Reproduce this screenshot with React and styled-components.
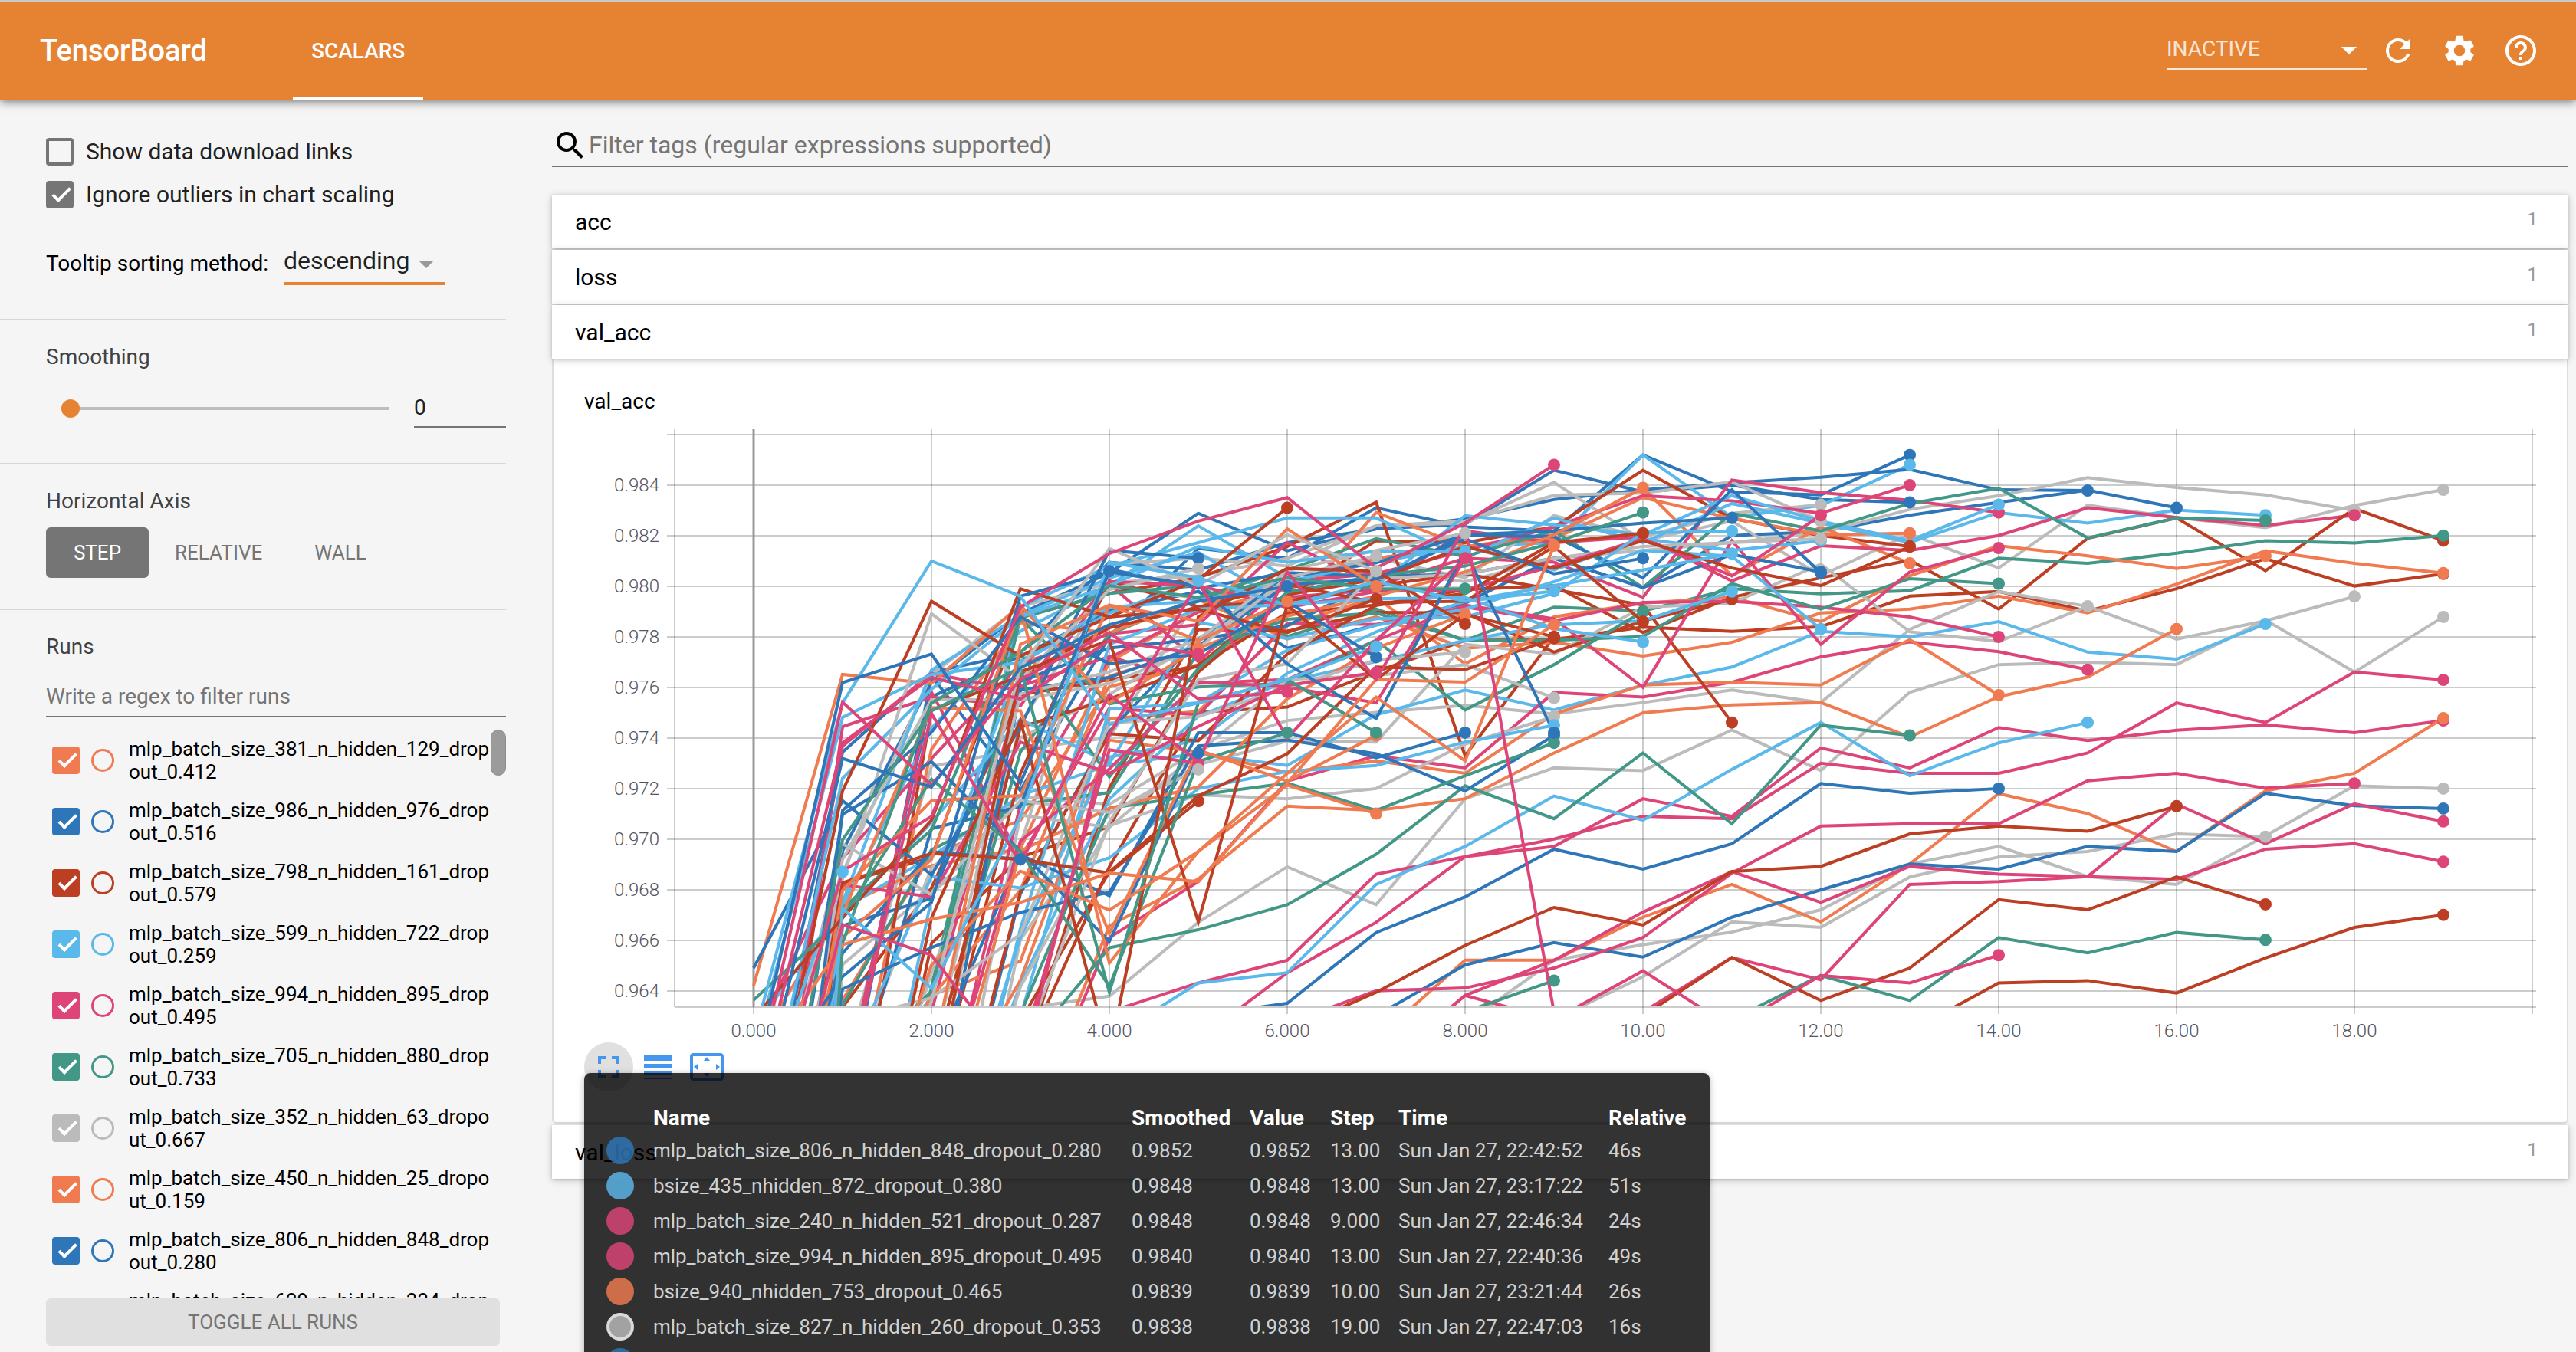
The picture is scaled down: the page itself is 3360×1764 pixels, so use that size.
import React from 'react';
import styled, { createGlobalStyle } from 'styled-components';
import {
  MdRefresh,
  MdSettings,
  MdHelpOutline,
  MdSearch,
  MdFullscreen,
  MdLineWeight,
  MdSettingsOverscan,
} from 'react-icons/md';

/* ---------- palette ---------- */

const RUN = {
  o: '#f07b51',
  b: '#2e76b8',
  r: '#bc3e23',
  l: '#5bb8eb',
  p: '#dd4579',
  g: '#429787',
  y: '#bbbbbb',
};

const GlobalStyle = createGlobalStyle`
  *, *::before, *::after { box-sizing: border-box; }
  body {
    margin: 0;
    background: #f5f5f5;
    color: #000;
    font-family: Roboto, "Noto Sans", sans-serif;
    font-size: 28px;
  }
  button, input, select { font-family: inherit; margin: 0; }
`;

/* ---------- page frame ---------- */

const Page = styled.div`
  display: flex;
  flex-direction: column;
  height: 100vh;
  overflow: hidden;
`;

const Header = styled.header`
  display: flex;
  align-items: stretch;
  flex: none;
  height: 130px;
  padding-right: 48px;
  border-top: 2px solid #c9c9c9;
  background: #e68332;
  color: #fff;
  position: relative;
  z-index: 1;
  box-shadow: 0 2px 12px rgba(0, 0, 0, 0.6);
`;

const Brand = styled.h1`
  flex: none;
  width: 382px;
  margin: 0;
  padding-left: 52px;
  font-size: 38px;
  font-weight: 500;
  line-height: 128px;
`;

const Tabs = styled.nav`
  display: flex;
  flex: 1;
`;

const Tab = styled.a`
  padding: 2px 24px 0;
  border-bottom: 4px solid #fff;
  color: inherit;
  font-size: 28px;
  font-weight: 500;
  line-height: 126px;
  text-decoration: none;
`;

const HeaderTools = styled.div`
  display: flex;
  align-items: center;
  gap: 32px;
`;

const SelectBox = styled.div`
  position: relative;
  display: flex;
  color: ${(p) => p.$arrow};
  &::after {
    content: '';
    position: absolute;
    right: 14px;
    top: 20px;
    border: 10px solid transparent;
    border-top-color: currentColor;
    border-bottom: 0;
    pointer-events: none;
  }
`;

const StatusSelect = styled.select`
  appearance: none;
  width: 262px;
  height: 50px;
  padding: 0 0 4px;
  border: 0;
  border-bottom: 2px solid rgba(255, 255, 255, 0.8);
  background: transparent;
  color: rgba(255, 255, 255, 0.8);
  font-size: 28px;
`;

const SortSelect = styled.select`
  appearance: none;
  width: 210px;
  height: 52px;
  padding: 0 0 8px;
  border: 0;
  border-bottom: 4px solid #e68332;
  background: transparent;
  color: #212121;
  font-size: 32px;
`;

const IconButton = styled.button`
  display: flex;
  padding: 0;
  border: 0;
  background: none;
  color: inherit;
  font-size: 48px;
`;

const StatusGroup = styled.div`
  display: flex;
  align-items: center;
  gap: 16px;
`;

const Body = styled.div`
  flex: 1;
  min-height: 0;
  display: grid;
  grid-template-columns: 660px minmax(0, 1fr);
  gap: 60px;
`;

/* ---------- sidebar ---------- */

const Sidebar = styled.aside`
  display: flex;
  flex-direction: column;
  min-height: 0;
`;

const Section = styled.section`
  flex: none;
  padding: 32px 0 ${(p) => p.$bottom}px 60px;
  border-bottom: 2px solid #d6d6d6;
`;

const OptionsSection = styled(Section)`
  padding-top: 50px;
`;

const RunsSection = styled.section`
  flex: 1;
  min-height: 0;
  display: flex;
  flex-direction: column;
  padding: 32px 0 8px 60px;
`;

const Heading = styled.h2`
  margin: 0;
  color: #424242;
  font-size: 28px;
  font-weight: 400;
  line-height: 32px;
`;

const CheckLabel = styled.label`
  display: flex;
  align-items: center;
  gap: 16px;
  height: 36px;
  margin-bottom: 20px;
  color: #212121;
  font-size: 30px;
  line-height: 36px;
`;

const CheckBox = styled.input`
  appearance: none;
  position: relative;
  flex: none;
  width: 36px;
  height: 36px;
  border: 4px solid ${(p) => p.$color};
  border-radius: 4px;
  &:checked {
    background: ${(p) => p.$color};
  }
  &:checked::after {
    content: '';
    position: absolute;
    left: 0;
    top: 0;
    width: 12px;
    height: 24px;
    border: solid #fff;
    border-width: 0 4px 4px 0;
    transform: rotate(45deg);
    transform-origin: 100% 100%;
  }
`;

const SortRow = styled.div`
  display: flex;
  align-items: center;
  gap: 20px;
  margin-top: 48px;
  label {
    padding-bottom: 4px;
    line-height: 36px;
  }
`;

const SliderRow = styled.div`
  display: flex;
  align-items: center;
  gap: 20px;
  margin-top: 26px;
  padding-left: 20px;
`;

const Slider = styled.input`
  appearance: none;
  flex: 1;
  min-width: 0;
  height: 24px;
  background: linear-gradient(#bdbdbd, #bdbdbd) center / calc(100% - 24px) 4px no-repeat;
  &::-webkit-slider-thumb {
    appearance: none;
    width: 24px;
    height: 24px;
    border-radius: 50%;
    background: #e68332;
  }
`;

const TextField = styled.input`
  width: ${(p) => p.$width};
  height: ${(p) => p.$height}px;
  margin-top: ${(p) => p.$top || 0}px;
  padding: 0 0 2px;
  border: 0;
  border-bottom: 2px solid #757575;
  border-radius: 0;
  background: transparent;
  color: #212121;
  font-size: 28px;
  &::placeholder {
    color: #757575;
    opacity: 1;
  }
`;

const AxisButtons = styled.div`
  display: flex;
  margin-top: 18px;
`;

const AxisButton = styled.button`
  min-width: 134px;
  height: 66px;
  padding: 0 34px;
  border: 0;
  border-radius: 6px;
  background: ${(p) => (p.$active ? '#757575' : 'transparent')};
  color: ${(p) => (p.$active ? '#fff' : '#757575')};
  font-size: 26px;
`;

const RunListFrame = styled.div`
  position: relative;
  flex: 1;
  min-height: 0;
  overflow: hidden;
`;

const ScrollThumb = styled.div`
  position: absolute;
  top: 16px;
  right: 0;
  width: 20px;
  height: 60px;
  border: 1px solid #8c8c8c;
  border-radius: 10px;
  background: #9b9b9b;
`;

const RunList = styled.ul`
  margin: 0;
  padding: 16px 20px 0 8px;
  list-style: none;
`;

const RunRow = styled.li`
  display: flex;
  align-items: center;
  height: 80px;
`;

const Isolate = styled.input`
  appearance: none;
  flex: none;
  width: 30px;
  height: 30px;
  margin: 0 19px 0 15px;
  border: 3px solid ${(p) => p.$color};
  border-radius: 50%;
`;

const RunName = styled.label`
  flex: 1;
  min-width: 0;
  font-size: 26px;
  line-height: 30px;
  word-break: break-all;
`;

const ToggleAll = styled.button`
  flex: none;
  height: 62px;
  margin-right: 8px;
  border: 0;
  border-radius: 6px;
  background: #e0e0e0;
  color: #757575;
  font-size: 26px;
`;

/* ---------- main column ---------- */

const Main = styled.main`
  min-width: 0;
  padding: 36px 10px 0 0;
`;

const TagFilter = styled.label`
  display: flex;
  align-items: flex-start;
  height: 52px;
  margin-bottom: 36px;
  border-bottom: 2px solid #757575;
  font-size: 48px;
`;

const TagInput = styled.input`
  flex: 1;
  height: 46px;
  padding: 0;
  border: 0;
  background: transparent;
  font-size: 32px;
  &::placeholder {
    color: #757575;
    opacity: 1;
  }
`;

const Category = styled.button`
  position: relative;
  display: flex;
  align-items: center;
  justify-content: space-between;
  width: 100%;
  height: 70px;
  margin-bottom: ${(p) => (p.$open ? 0 : 2)}px;
  padding: 0 40px 0 30px;
  border: 0;
  background: #fff;
  box-shadow: 0 2px 10px rgba(0, 0, 0, 0.2), 0 1px 3px rgba(0, 0, 0, 0.15);
  color: #000;
  font-size: 30px;
`;

const Count = styled.span`
  padding-bottom: 6px;
  color: #999;
  font-size: 24px;
`;

const Card = styled.article`
  margin-bottom: 2px;
  padding: 40px;
  border: 2px solid #dedede;
  border-top: 0;
  border-radius: 0 0 6px 6px;
  background: #fff;
`;

const CardTitle = styled.h3`
  margin: 0 0 16px;
  font-size: 28px;
  font-weight: 400;
  line-height: 32px;
`;

const ChartSvg = styled.svg`
  display: block;
  width: 100%;
  height: auto;
  text {
    fill: #55545f;
    font-family: Roboto, "Liberation Sans", sans-serif;
    font-size: 24px;
    font-weight: 300;
  }
`;

const ChartTools = styled.div`
  position: relative;
  display: flex;
  color: #4596ef;
`;

const ChartTool = styled(IconButton)`
  align-items: center;
  justify-content: center;
  width: 64px;
  height: 64px;
  border-radius: 50%;
  background: ${(p) => (p.$hover ? '#e0e0e0' : 'none')};
`;

const Tooltip = styled.div`
  position: absolute;
  left: 0;
  top: 40px;
  z-index: 2;
  width: 1468px;
  padding: 38px 24px 24px 29px;
  border-radius: 8px;
  background: rgba(0, 0, 0, 0.8);
  box-shadow: 0 2px 10px rgba(0, 0, 0, 0.3);
`;

const TooltipTable = styled.table`
  width: 100%;
  table-layout: fixed;
  border-collapse: collapse;
  color: #d0d0d0;
  font-size: 26px;
  text-align: left;
  white-space: nowrap;
  th {
    height: 40px;
    padding: 0;
    color: #fff;
    font-size: 28px;
    font-weight: 700;
  }
  td {
    height: 46px;
    padding: 0;
  }
`;

const Col = styled.col`
  width: ${(p) => p.$w}px;
`;

const Swatch = styled.span`
  display: block;
  width: 36px;
  height: 36px;
  border: ${(p) => (p.$nearest ? '4px solid #fff' : '0')};
  border-radius: 50%;
  background: ${(p) => p.$color};
  opacity: 0.82;
`;

/* ---------- data ---------- */

const RUNS = [
  ['o', 'mlp_batch_size_381_n_hidden_129_dropout_0.412'],
  ['b', 'mlp_batch_size_986_n_hidden_976_dropout_0.516'],
  ['r', 'mlp_batch_size_798_n_hidden_161_dropout_0.579'],
  ['l', 'mlp_batch_size_599_n_hidden_722_dropout_0.259'],
  ['p', 'mlp_batch_size_994_n_hidden_895_dropout_0.495'],
  ['g', 'mlp_batch_size_705_n_hidden_880_dropout_0.733'],
  ['y', 'mlp_batch_size_352_n_hidden_63_dropout_0.667'],
  ['o', 'mlp_batch_size_450_n_hidden_25_dropout_0.159'],
  ['b', 'mlp_batch_size_806_n_hidden_848_dropout_0.280'],
  ['r', 'mlp_batch_size_629_n_hidden_334_dropout_0.341'],
];

const POINTS = [
  ['b', 'mlp_batch_size_806_n_hidden_848_dropout_0.280', '0.9852', '13.00', 'Sun Jan 27, 22:42:52', '46s'],
  ['l', 'bsize_435_nhidden_872_dropout_0.380', '0.9848', '13.00', 'Sun Jan 27, 23:17:22', '51s'],
  ['p', 'mlp_batch_size_240_n_hidden_521_dropout_0.287', '0.9848', '9.000', 'Sun Jan 27, 22:46:34', '24s'],
  ['p', 'mlp_batch_size_994_n_hidden_895_dropout_0.495', '0.9840', '13.00', 'Sun Jan 27, 22:40:36', '49s'],
  ['o', 'bsize_940_nhidden_753_dropout_0.465', '0.9839', '10.00', 'Sun Jan 27, 23:21:44', '26s'],
  ['y', 'mlp_batch_size_827_n_hidden_260_dropout_0.353', '0.9838', '19.00', 'Sun Jan 27, 22:47:03', '16s'],
  ['b', 'bsize_512_nhidden_640_dropout_0.310', '0.9838', '15.00', 'Sun Jan 27, 22:44:10', '58s'],
];

/* Each curve: colour key, step of its first listed point, heights below the plot's top edge. */
const CURVES = [
  ['b', 5, [215, 311, 255, 243, 105, 160, 143, 180, 187]],
  ['b', 5, [305, 330, 201, 250, 260, 66, 160, 168, 66]],
  ['l', 5, [247, 380, 330, 300, 290, 66, 225, 195, 91]],
  ['b', 4, [340, 360, 290, 255, 230, 180, 155, 137, 123, 103, 155, 157]],
  ['b', 5, [415, 560, 500, 445, 330, 405, 272, 262, 220, 187, 156, 201]],
  ['y', 4, [345, 330, 350, 247, 240, 136, 285, 235, 375, 268, 355, 194, 226, 252, 195, 155]],
  ['y', 5, [375, 330, 247, 235, 169, 163, 135, 235]],
  ['y', 5, [430, 400, 330, 380, 221, 275, 215, 193]],
  ['y', 6, [390, 363, 390, 330, 310, 290, 265, 205, 170, 124, 149, 168, 208]],
  ['r', 4, [420, 380, 300, 187, 835, 531]],
  ['r', 6, [430, 285, 290, 250, 105, 228, 272, 300]],
  ['o', 6, [470, 213, 300, 280, 175, 228, 270, 266]],
  ['o', 6, [410, 330, 300, 270, 150, 375, 250, 343]],
  ['p', 7, [370, 310, 250, 170, 183, 215, 143]],
  ['p', 5, [500, 290, 400, 330, 340, 430, 130, 162, 182, 213]],
  ['l', 5, [315, 450, 400, 221, 245, 270, 170, 235, 285, 193]],
  ['l', 5, [290, 227, 227, 330, 227, 290, 190, 240, 290, 213, 240, 207, 220]],
  ['p', 6, [430, 410, 260, 290, 275, 388, 298, 310, 272, 201, 226, 246, 220]],
  ['r', 7, [450, 410, 400, 520, 430, 380, 335, 460, 279, 227, 362, 203, 285]],
  ['g', 5, [430, 360, 280, 325, 260, 405, 215, 260, 190, 151, 278, 227, 233]],
  ['g', 4, [420, 400, 530, 460, 540, 455, 465, 408, 421, 413, 330, 343, 317, 285, 291, 272]],
  ['r', 7, [620, 540, 538, 506, 517, 505, 427, 415, 465, 408, 331, 401, 370]],
  ['o', 7, [480, 560, 545, 580, 545, 470, 460, 427, 470, 396, 311, 343, 368]],
  ['o', 7, [430, 600, 480, 445, 430, 492, 375, 298, 324, 356, 324]],
  ['y', 7, [800, 550, 575, 455, 445, 345, 518, 543, 453]],
  ['y', 5, [820, 745, 724, 706, 728, 699, 667, 699, 512, 415, 453, 537, 490, 428]],
  ['y', 4, [1450, 1261, 1119, 1216, 945, 866, 873, 769, 873, 673, 602, 596, 602, 488, 621, 480]],
  ['l', 5, [830, 860, 730, 667, 718, 655, 608, 517, 531, 492, 570, 588, 498]],
  ['o', 4, [1270, 1150, 964, 975, 945, 828, 725, 705, 699, 787, 684, 634, 511]],
  ['p', 4, [1300, 1157, 900, 835, 866, 673, 685, 647, 582, 544, 569, 615]],
  ['o', 4, [795, 825, 878, 848, 880, 728, 654, 647, 654, 538, 680]],
  ['p', 4, [1490, 1416, 1358, 1138, 1093, 1048, 990, 996, 854, 880, 880, 828, 700, 750, 621, 641]],
  ['p', 5, [1560, 1390, 1261, 1093, 1067, 945, 990, 815, 866, 763, 796, 770, 756, 776, 745]],
  ['y', 8, [1700, 1510, 1400, 1260, 1274, 1145, 1094, 1080, 1035, 1042]],
  ['y', 8, [1520, 1358, 1318, 1286, 1229, 1112, 1067, 1144, 1164, 1040, 912, 919]],
  ['o', 7, [1560, 1358, 1358, 1248, 1164, 1260, 1112, 932, 983, 1080, 925, 880, 739]],
  ['b', 7, [1500, 1370, 1313, 1350, 1248, 1178, 1112, 1125, 1067, 1080, 931, 963, 970]],
  ['p', 6, [1520, 1436, 1429, 1378, 1300, 1135, 1015, 1009, 1009, 899, 880, 918, 906]],
  ['p', 7, [1640, 1448, 1358, 1235, 1131, 1210, 1118, 1138, 1144, 959, 1060, 958, 1003]],
  ['p', 10, [1490, 1351, 1408, 1164, 1157, 1144, 1151, 1074, 1060, 1106]],
  ['r', 6, [1540, 1440, 1320, 1223, 1268, 1131, 1118, 1035, 1015, 1028, 964]],
  ['r', 10, [1500, 1351, 1461, 1378, 1203, 1229, 1145, 1215]],
  ['g', 11, [1510, 1397, 1461, 1300, 1339, 1287, 1306]],
  ['r', 13, [1540, 1416, 1410, 1442, 1352, 1274, 1242]],
  ['p', 7, [1640, 1448, 1510, 1385, 1530, 1397, 1416, 1345]],
  ['b', 5, [1500, 1468, 1287, 1196, 1074, 1125, 1060, 906, 931, 919]],
  ['l', 4, [1560, 1416, 1390, 1164, 1067, 938, 1000, 870, 750, 886, 802, 750]],
  ['g', 3, [1600, 1326, 1280, 1216, 1087, 912, 996, 828, 1009, 757, 783]],
  ['r', 7, [400, 370, 410, 450, 750]],
  ['r', 8, [470, 570, 490, 435]],
  ['p', 8, [455, 490, 443, 440, 455, 480, 531]],
  ['g', 7, [470, 540, 540, 530, 395, 460, 382, 395]],
  ['p', 6, [640, 540, 450, 485, 660, 285, 550, 365, 304]],
  ['b', 8, [370, 330, 405, 320, 365]],
  ['b', 8, [270, 275, 380, 155, 367]],
  ['l', 8, [460, 390, 310, 325, 511]],
  ['l', 7, [340, 300, 360, 280, 310, 285]],
  ['y', 8, [370, 330, 300, 290, 280]],
  ['p', 8, [410, 350, 280, 375, 220]],
  ['r', 8, [300, 355, 285, 355, 400, 300]],
  ['b', 8, [270, 260, 240, 227]],
  ['l', 8, [480, 420, 265, 260]],
  ['l', 8, [440, 400, 360, 318]],
  ['l', 8, [540, 500, 490, 415]],
  ['o', 8, [365, 270, 150]],
  ['g', 8, [350, 290, 213]],
  ['r', 8, [420, 290, 266]],
  ['b', 8, [280, 370, 330]],
  ['g', 6, [650, 540, 718, 602, 466]],
  ['r', 8, [440, 300, 492]],
  ['l', 8, [430, 510, 544]],
  ['y', 6, [640, 630, 602, 687]],
  ['y', 6, [945, 919, 805, 735]],
  ['l', 6, [875, 860, 800, 757]],
  ['b', 6, [795, 830, 925, 783]],
  ['g', 6, [905, 975, 886, 802]],
  ['g', 8, [1490, 1410]],
  ['b', 5, [776, 776, 840, 776]],
  ['p', 7, [700, 330]],
  ['o', 7, [560, 473]],
  ['y', 7, [590, 570]],
  ['y', 7, [310, 266]],
  ['p', 4, [820, 855]],
  ['r', 6, [830, 608, 615, 535]],
  ['y', 5, [640, 600, 363]],
  ['o', 0, [1423, 627, 650, 450, 700, 560]],
  ['b', 0, [1378, 950, 1140, 760, 310, 330]],
  ['l', 0, [1600, 737, 627, 597, 470, 388]],
  ['l', 0, [1900, 893, 665, 480, 400, 300, 340, 312, 312]],
  ['r', 0, [2000, 925, 440, 580, 480, 385, 201]],
  ['y', 0, [1900, 1150, 472, 640, 410, 356]],
  ['p', 0, [2300, 1165, 1196, 800, 880, 760, 655, 622]],
  ['y', 0, [2000, 1060, 1190, 950, 980, 870]],
  ['l', 0, [1800, 1132]],
  ['b', 0, [2200, 1340, 1080, 1100]],
  ['b', 0, [2400, 985, 850, 1080, 1310, 828]],
  ['r', 0, [2500, 1160, 1085, 1100, 1135, 951]],
  ['g', 0, [1460, 1250, 895, 1080, 1425, 850, 776]],
  ['o', 0, [2500, 1240, 712, 720, 1290, 820, 900, 783]],
  ['y', 0, [2500, 1100, 692, 692, 650, 560, 380, 324]],
  ['o', 0, [2500, 1180, 950, 937, 450, 540, 440]],
  ['r', 1, [1250, 1000, 408, 480, 460, 520, 434]],
  ['b', 1, [1400, 1210, 427, 365, 400, 600, 740, 312, 776]],
  ['o', 1, [1300, 1100, 455, 1365, 1080, 910, 983]],
  ['b', 1, [975, 775, 480, 600, 575, 440, 583]],
  ['r', 2, [1250, 745, 1600, 480, 356, 363, 498]],
  ['r', 3, [620, 540, 1260, 450, 640, 473, 531]],
  ['g', 2, [700, 570, 400, 430, 380, 408, 408]],
  ['g', 1, [1050, 720, 610, 1440, 700, 640, 776]],
  ['o', 2, [1370, 1130, 1230, 1080, 880, 685, 848, 298]],
  ['o', 3, [550, 450, 490, 255, 402]],
  ['o', 3, [1210, 1135, 1157, 905, 640, 647, 500]],
  ['y', 3, [610, 305, 400, 270, 363]],
  ['l', 1, [1225, 1430, 990, 340, 380, 450, 390, 440, 414]],
  ['p', 1, [1130, 990, 455, 318, 235, 175, 355, 240, 91]],
  ['l', 0, [1560, 700, 337, 427, 755, 700, 640, 556]],
  ['p', 0, [1700, 698, 910, 640, 520, 690, 672]],
  ['p', 0, [1750, 802, 635, 690, 540, 575]],
  ['b', 0, [1800, 842, 915, 610, 500, 440, 402]],
  ['p', 0, [2100, 1267, 1345, 1640, 780, 390, 790, 540, 330]],
  ['p', 5, [850, 365, 640, 250, 1490]],
  ['b', 0, [1650, 648, 575, 905, 363]],
];

/* Typical climb, per epoch, of a run before its first listed point. */
const WARMUP = [1500, 500, 430, 300, 160, 90, 50, 30, 60, 60, 90, 90, 90];
/* Best height that such a run can have had at each epoch. */
const BEST = [1500, 760, 600, 440, 350];

function buildRuns() {
  let seed = 7;
  const random = () => {
    seed = (seed * 16807) % 2147483647;
    return seed / 2147483647;
  };
  return CURVES.map(([color, first, listed]) => {
    const heights = [...listed];
    for (let step = first - 1; step >= 0; step -= 1) {
      const pull = random();
      const change = WARMUP[step] * (0.1 + pull * pull * 2.6);
      const dip = random() < 0.15 && step > 1 && heights[0] < 1300 ? -0.5 : 1;
      const best = (BEST[step] || 340) + random() * 60;
      heights.unshift(Math.max(best, heights[0] + change * dip));
    }
    return { color: RUN[color], heights };
  });
}

const X0 = 221;
const STEP = 116;
const TOP = 4;
const BOTTOM = 758;
const x = (step) => X0 + step * STEP;
const y = (height) => TOP + height / 1.96;
const yTick = (i) => 11 + i * 66;

function Chart() {
  const runs = React.useMemo(buildRuns, []);
  const rows = Array.from({ length: 12 }, (_, i) => i);
  const columns = Array.from({ length: 11 }, (_, i) => i * 2);
  return (
    <ChartSvg viewBox="0 0 2546 804" role="img" aria-label="val_acc by step">
      <defs>
        <clipPath id="plot">
          <rect x="118" y={TOP} width="2424" height={BOTTOM - TOP - 1} />
        </clipPath>
      </defs>
      <g stroke="#000" strokeOpacity="0.2" strokeWidth="2">
        {rows.map((i) => (
          <line key={i} x1="108" x2="2546" y1={yTick(i)} y2={yTick(i)} />
        ))}
        {columns.map((s) => (
          <line key={s} x1={x(s)} x2={x(s)} y1={TOP} y2="767" />
        ))}
        <line x1="118" x2="118" y1={TOP} y2={BOTTOM} />
        <line x1="118" x2="2546" y1={BOTTOM} y2={BOTTOM} />
      </g>
      <line x1={X0} x2={X0} y1={TOP} y2={BOTTOM} stroke="#999" strokeWidth="3" />
      <g clipPath="url(#plot)" fill="none" strokeWidth="4">
        {runs.map((run, i) => (
          <polyline
            key={i}
            stroke={run.color}
            points={run.heights.map((h, s) => `${x(s)},${y(h)}`).join(' ')}
          />
        ))}
      </g>
      <g clipPath="url(#plot)">
        {runs.map((run, i) => {
          const last = run.heights.length - 1;
          return <circle key={i} cx={x(last)} cy={y(run.heights[last])} r="8" fill={run.color} />;
        })}
      </g>
      {rows.slice(1).map((i) => (
        <text key={i} x="98" y={yTick(i) + 8} textAnchor="end">
          {(0.986 - i * 0.002).toFixed(3)}
        </text>
      ))}
      {columns.slice(0, 10).map((s) => (
        <text key={s} x={x(s)} y="797" textAnchor="middle">
          {s.toFixed(s < 10 ? 3 : 2)}
        </text>
      ))}
    </ChartSvg>
  );
}

function PointTooltip() {
  return (
    <Tooltip role="tooltip">
      <TooltipTable>
        <colgroup>
          <Col $w={61} />
          <Col $w={624} />
          <Col $w={154} />
          <Col $w={105} />
          <Col $w={89} />
          <Col $w={274} />
          <col />
        </colgroup>
        <thead>
          <tr>
            <th aria-label="Colour" />
            <th>Name</th>
            <th>Smoothed</th>
            <th>Value</th>
            <th>Step</th>
            <th>Time</th>
            <th>Relative</th>
          </tr>
        </thead>
        <tbody>
          {POINTS.map(([color, name, value, step, time, relative]) => (
            <tr key={name}>
              <td>
                <Swatch $color={RUN[color]} $nearest={color === 'y'} />
              </td>
              <td>{name}</td>
              <td>{value}</td>
              <td>{value}</td>
              <td>{step}</td>
              <td>{time}</td>
              <td>{relative}</td>
            </tr>
          ))}
        </tbody>
      </TooltipTable>
    </Tooltip>
  );
}

function TagCategory({ name, open }) {
  return (
    <Category type="button" aria-expanded={!!open} $open={open}>
      {name}
      <Count>1</Count>
    </Category>
  );
}

export default function App() {
  return (
    <Page>
      <GlobalStyle />
      <Header>
        <Brand>TensorBoard</Brand>
        <Tabs>
          <Tab href="#scalars">SCALARS</Tab>
        </Tabs>
        <HeaderTools>
          <StatusGroup>
            <SelectBox $arrow="#fff">
              <StatusSelect aria-label="Inactive dashboards" defaultValue="INACTIVE">
                <option>INACTIVE</option>
              </StatusSelect>
            </SelectBox>
            <IconButton type="button" aria-label="Reload">
              <MdRefresh />
            </IconButton>
          </StatusGroup>
          <IconButton type="button" aria-label="Settings">
            <MdSettings />
          </IconButton>
          <IconButton type="button" aria-label="Help">
            <MdHelpOutline />
          </IconButton>
        </HeaderTools>
      </Header>

      <Body>
        <Sidebar>
          <OptionsSection $bottom={44}>
            <CheckLabel>
              <CheckBox type="checkbox" $color="#757575" />
              Show data download links
            </CheckLabel>
            <CheckLabel>
              <CheckBox type="checkbox" $color="#757575" defaultChecked />
              Ignore outliers in chart scaling
            </CheckLabel>
            <SortRow>
              <label htmlFor="sorting">Tooltip sorting method:</label>
              <SelectBox $arrow="#999">
                <SortSelect id="sorting" defaultValue="descending">
                  <option>descending</option>
                </SortSelect>
              </SelectBox>
            </SortRow>
          </OptionsSection>

          <Section $bottom={46}>
            <Heading>Smoothing</Heading>
            <SliderRow>
              <Slider type="range" min="0" max="1" step="0.001" defaultValue="0" aria-label="Smoothing" />
              <TextField $width="120px" $height={50} defaultValue="0" aria-label="Smoothing value" />
            </SliderRow>
          </Section>

          <Section $bottom={40}>
            <Heading>Horizontal Axis</Heading>
            <AxisButtons>
              <AxisButton type="button" $active>STEP</AxisButton>
              <AxisButton type="button">RELATIVE</AxisButton>
              <AxisButton type="button">WALL</AxisButton>
            </AxisButtons>
          </Section>

          <RunsSection>
            <Heading>Runs</Heading>
            <TextField
              $width="100%"
              $height={52}
              $top={24}
              placeholder="Write a regex to filter runs"
              aria-label="Filter runs"
            />
            <RunListFrame>
              <RunList>
                {RUNS.map(([color, name]) => (
                  <RunRow key={name}>
                    <CheckBox type="checkbox" id={name} $color={RUN[color]} defaultChecked />
                    <Isolate type="radio" name="isolate" aria-label={`Only ${name}`} $color={RUN[color]} />
                    <RunName htmlFor={name}>{name}</RunName>
                  </RunRow>
                ))}
              </RunList>
              <ScrollThumb />
            </RunListFrame>
            <ToggleAll type="button">TOGGLE ALL RUNS</ToggleAll>
          </RunsSection>
        </Sidebar>

        <Main>
          <TagFilter>
            <MdSearch />
            <TagInput placeholder="Filter tags (regular expressions supported)" aria-label="Filter tags" />
          </TagFilter>
          <TagCategory name="acc" />
          <TagCategory name="loss" />
          <TagCategory name="val_acc" open />
          <Card>
            <CardTitle>val_acc</CardTitle>
            <Chart />
            <ChartTools>
              <ChartTool type="button" aria-label="Full screen" $hover>
                <MdFullscreen />
              </ChartTool>
              <ChartTool type="button" aria-label="Toggle y-axis log scale">
                <MdLineWeight />
              </ChartTool>
              <ChartTool type="button" aria-label="Fit domain to data">
                <MdSettingsOverscan />
              </ChartTool>
              <PointTooltip />
            </ChartTools>
          </Card>
          <TagCategory name="val_loss" />
        </Main>
      </Body>
    </Page>
  );
}
